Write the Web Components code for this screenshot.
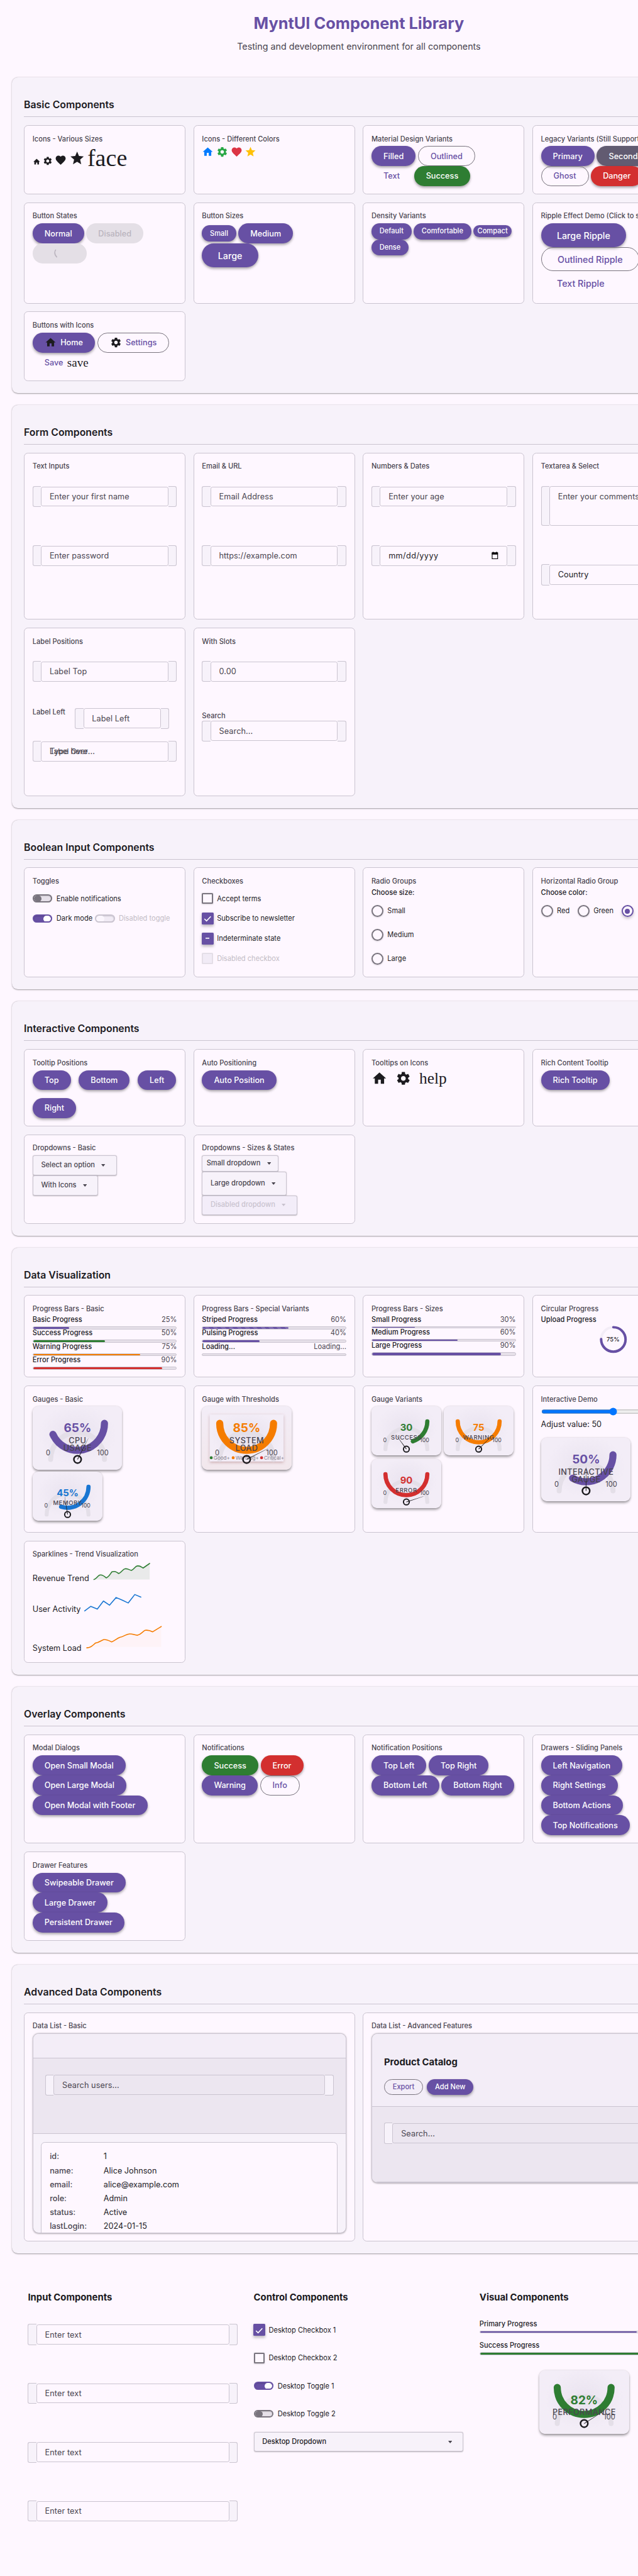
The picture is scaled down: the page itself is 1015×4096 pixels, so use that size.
<!DOCTYPE html>
<html lang="en">
<head>
<meta charset="utf-8">
<title>MyntUI Component Library</title>
<style>
html,body{margin:0;padding:0;background:#fef7ff}
body{width:1015px;height:4096px;overflow:hidden}
mynt-app{zoom:.79297}
</style>
</head>
<body>
<mynt-app></mynt-app>
<script>
const define=(name,css,render)=>customElements.define(name,class extends HTMLElement{
  connectedCallback(){
    if(this.shadowRoot)return;
    this.attachShadow({mode:'open'});
    const t=document.createElement('template');
    t.innerHTML='<style>*{box-sizing:border-box}:host{display:block;box-sizing:border-box}'+css+'</style>'+render(this);
    this.shadowRoot.append(t.content.cloneNode(true));
  }
});
const at=(e,n,d='')=>e.getAttribute(n)??d;

define('ui-row',`:host{display:flex;align-items:center;gap:4.5px;white-space:nowrap;width:max-content}
:host([g16]){gap:16px}:host([end]){align-items:flex-end}`,()=>'<slot></slot>');

define('ui-section',`:host{background:#f7f2fa;border-radius:12px;margin:0 0 24px;padding:40.6px 24px 24px;width:1392px;box-shadow:0 1px 2px rgba(0,0,0,.3),0 1px 3px 1px rgba(0,0,0,.06)}
h2{margin:0 0 16px;font:600 20px/30px Inter,sans-serif;height:39px;border-bottom:1px solid #cac4d0;color:#1c1b1f}
.g{display:grid;gap:16px}`,e=>`<h2>${at(e,'label')}</h2><div class="g" style="grid-template-columns:repeat(${at(e,'cols','4')},minmax(0,1fr));grid-template-rows:${at(e,'rows')}"><slot></slot></div>`);

define('ui-card',`:host{background:#fef7ff;border:1px solid #cac4d0;border-radius:8px;padding:16px;min-width:0}
h3{margin:0 0 4px;font:500 14px/21px Inter,sans-serif;color:#49454f;white-space:nowrap}`,e=>`<h3>${at(e,'label')}</h3><slot></slot>`);

define('ui-button',`:host{display:inline-flex;align-items:center;justify-content:center;gap:8px;height:40px;padding:0 24px;border-radius:20px;background:#6750a4;color:#fff;font:500 16px/24px Inter,sans-serif;white-space:nowrap;box-shadow:0 3px 6px rgba(0,0,0,.26),0 2px 4px rgba(0,0,0,.12)}
:host([v=outlined]){background:none;color:#6750a4;border:1px solid #79747e;box-shadow:none}
:host([v=text]){background:none;color:#6750a4;box-shadow:none}
:host([v=success]){background:#2e7d32}:host([v=danger]){background:#d32f2f}:host([v=secondary]){background:#625b71}
:host([v=off]){background:#e4dfe6;color:#bab4be;box-shadow:none}
:host([s=s]){height:32px;padding:0 16px;font-size:14px;border-radius:16px}
:host([s=c]){height:24px;padding:0 8px;font-size:14px;border-radius:12px}
:host([s=l]){height:48px;padding:0 32px;font-size:18px;border-radius:24px}
:host([wait]){width:109px;justify-content:flex-start;padding-left:43px}`,()=>'<slot></slot>');

const ICON={home:'M10 20v-6h4v6h5v-8h3L12 3 2 12h3v8z',
gear:'M19.14 12.94c.04-.3.06-.61.06-.94 0-.32-.02-.64-.07-.94l2.03-1.58c.18-.14.23-.41.12-.61l-1.92-3.32c-.12-.22-.37-.29-.59-.22l-2.39.96c-.5-.38-1.03-.7-1.62-.94l-.36-2.54c-.04-.24-.24-.41-.48-.41h-3.84c-.24 0-.43.17-.47.41l-.36 2.54c-.59.24-1.13.57-1.62.94l-2.39-.96c-.22-.08-.47 0-.59.22L2.74 8.87c-.12.21-.08.47.12.61l2.03 1.58c-.05.3-.09.63-.09.94s.02.64.07.94l-2.03 1.58c-.18.14-.23.41-.12.61l1.92 3.32c.12.22.37.29.59.22l2.39-.96c.5.38 1.03.7 1.62.94l.36 2.54c.05.24.24.41.48.41h3.84c.24 0 .44-.17.47-.41l.36-2.54c.59-.24 1.13-.56 1.62-.94l2.39.96c.22.08.47 0 .59-.22l1.92-3.32c.12-.22.07-.47-.12-.61l-2.01-1.58zM12 15.6c-1.98 0-3.6-1.62-3.6-3.6s1.62-3.6 3.6-3.6 3.6 1.62 3.6 3.6-1.62 3.6-3.6 3.6z',
heart:'M12 21.35l-1.45-1.32C5.4 15.36 2 12.28 2 8.5 2 5.42 4.42 3 7.5 3c1.74 0 3.41.81 4.5 2.09C13.09 3.81 14.76 3 16.5 3 19.58 3 22 5.42 22 8.5c0 3.78-3.4 6.86-8.55 11.54L12 21.35z',
star:'M12 17.27L18.18 21l-1.64-7.03L22 9.24l-7.19-.61L12 2 9.19 8.63 2 9.24l5.46 4.73L5.82 21z'};
define('ui-icon',`:host{flex:none;display:block;color:#1c1b1f}svg{display:block}`,e=>{const s=at(e,'size','24');return `<svg width="${s}" height="${s}" viewBox="0 0 24 24" fill="${at(e,'color','#1c1b1f')}"><path d="${ICON[at(e,'name')]}"/></svg>`});
define('ui-ligature',`:host{font-family:"Liberation Serif",serif;color:#1c1b1f;white-space:nowrap;line-height:1}`,()=>'<slot></slot>');
define('ui-spinner',`svg{display:block}`,()=>'<svg width="16" height="18" viewBox="0 0 16 18" fill="none"><path d="M3.4 1.2C.8 5.5.8 11.5 5.8 16.6" stroke="#bab4be" stroke-width="2"/></svg>');

define('ui-field',`:host{padding-top:25px;height:119px;font:400 16px/24px Inter,sans-serif;color:#49454f}
:host([area]){height:157px}:host([label]){padding-top:8px}
:host([left]){display:flex;padding-top:0;height:66px;width:274px}
.l{font:500 14px/17px Inter,sans-serif;height:17px;white-space:nowrap}
:host([left]) .l{flex:none;width:85px}
.w{display:flex;height:42px;align-items:center;flex:1}
:host([area]) .w{height:80px}
.a{width:17px;height:100%;border:1px solid #cac4d0;background:#f7f2fa;flex:none}
.a.p{border-right:0;border-radius:4px 0 0 4px}.a.q{border-left:0;border-radius:0 4px 4px 0}
.i{flex:1;min-width:0;height:40px;border:1px solid #cac4d0;border-radius:4px;padding:0 16px;display:flex;align-items:center;justify-content:space-between;white-space:nowrap}
:host([area]) .i{height:80px;align-items:flex-start;padding-top:8px}
:host([dark]) .i{color:#1c1b1f}
.t{display:grid}.t>*{grid-area:1/1}.o{font:400 15px/24px Inter,sans-serif}`,e=>{
const l=at(e,'label'),o=at(e,'over');
return `${l?`<div class="l">${l}</div>`:''}<div class="w"><span class="a p"></span><div class="i"><span class="t"><span style="letter-spacing:${at(e,'ls','.1px')}">${at(e,'text')}</span>${o?`<span class="o">${o}</span>`:''}</span><slot></slot></div><span class="a q"></span></div>`});
define('ui-calendar',`:host{width:16px}svg{display:block}`,()=>'<svg width="16" height="16" viewBox="0 0 16 16"><path d="M2.5 2.5h11v12h-11z" fill="none" stroke="#000" stroke-width="1.4"/><path d="M2 2h12v4H2zM3.5.5h2V3h-2zM10.5.5h2V3h-2z"/></svg>');

define('ui-toggle',`:host{display:inline-flex;align-items:center;height:40px;gap:8px;font:400 14px/20px Inter,sans-serif;color:#1c1b1f;white-space:nowrap}
.k{width:40px;height:16px;border:2.6px solid #79747e;border-radius:8px;background:#e6e0e9;overflow:hidden;display:flex;box-shadow:inset 0 1px 2px rgba(0,0,0,.2)}
.d{width:16px;height:12px;border-radius:6px;background:#79747e}
:host([on]) .k{background:#6750a4;border-color:#6750a4;justify-content:flex-end}:host([on]) .d{background:#fff}
:host([off]){color:#c3bdc6}:host([off]) .k{border-color:#cac4d0;background:#f1ebf5}:host([off]) .d{background:#fbf6fd}
.x{padding-top:2px}`,()=>'<span class="k"><span class="d"></span></span><span class="x"><slot></slot></span>');

define('ui-checkbox',`:host{display:flex;align-items:center;height:40px;gap:8px;font:400 14px/20px Inter,sans-serif;color:#1c1b1f;white-space:nowrap}
.b{width:22px;height:22px;border:2.6px solid #79747e;border-radius:2px;display:flex;align-items:center;justify-content:center;box-shadow:0 1px 3px rgba(0,0,0,.18)}
:host([on]) .b,:host([mid]) .b{background:#6750a4;border:0;width:24px;height:24px;margin:0 -1px;box-shadow:0 3px 6px rgba(0,0,0,.25)}
:host([off]){color:#c3bdc6}:host([off]) .b{border-color:#e4dee7;background:#f1ebf6;box-shadow:none}.x{padding-top:2px}`,e=>`<span class="b">${e.hasAttribute('on')?'<svg width="16" height="16" viewBox="0 0 16 16" fill="none" stroke="#fff" stroke-width="2"><path d="M1.5 8.8 5.8 13 14.3 4"/></svg>':e.hasAttribute('mid')?'<svg width="8" height="2"><rect width="8" height="2" fill="#fff"/></svg>':''}</span><span class="x"><slot></slot></span>`);

define('ui-radio',`:host{display:flex;align-items:center;height:48px;gap:8px;font:400 14px/20px Inter,sans-serif;color:#1c1b1f;white-space:nowrap}
.b{width:24px;height:24px;border:2.6px solid #79747e;border-radius:50%;display:flex;align-items:center;justify-content:center;box-shadow:0 1px 3px rgba(0,0,0,.18)}
:host([on]) .b{border-color:#6750a4;box-shadow:0 3px 6px rgba(0,0,0,.22)}.d{width:10px;height:10px;border-radius:50%;background:#6750a4}`,e=>`<span class="b">${e.hasAttribute('on')?'<span class="d"></span>':''}</span><slot></slot>`);
define('ui-legend',`:host{font:500 14px/16px Inter,sans-serif;color:#1c1b1f;height:21px}`,()=>'<slot></slot>');

define('ui-dropdown',`:host{display:flex;align-items:center;width:max-content;height:40px;border:1px solid #cac4d0;border-radius:4px;padding:0 16px;background:#f7f2fa;font:500 14px/20px Inter,sans-serif;color:#49454f;white-space:nowrap;box-shadow:0 1px 2px rgba(0,0,0,.26)}
:host([s=s]){height:32px;padding:0 8px}:host([s=l]){height:48px}
:host([off]){background:#f3edf9;color:#c9c3cf}
:host([wide]){width:auto;justify-content:space-between;color:#1c1b1f}
svg{margin:0 5.5px 0 13px;flex:none}:host([wide]) svg{color:#49454f}`,()=>'<span><slot></slot></span><svg width="8" height="5" viewBox="0 0 8 5" fill="currentColor"><path d="M0 0h8L4 5z"/></svg>');

define('ui-progress',`.h{display:flex;justify-content:space-between;height:20px;font:500 14px/15px Inter,sans-serif;color:#1c1b1f}
.h span+span{font-weight:400;color:#49454f}
.t{border:1px solid #cac4d0;border-radius:4px;background:#e6e0e9;overflow:hidden;margin-bottom:1px;display:flex}
.f{border-radius:3px}`,e=>{const p=at(e,'v','0'),h=at(e,'h','6'),c=at(e,'color','#6750a4');
const bg=e.hasAttribute('striped')?'repeating-linear-gradient(45deg,#6750a4 0 5.66px,#7f6bb4 5.66px 11.32px)':c;
return `<div class="h"><span>${at(e,'label')}</span><span>${at(e,'value',p+'%')}</span></div><div class="t" style="height:${h}px"><span class="f" style="width:${p}%;background:${bg}"></span></div>`});

define('ui-ring',`:host{font:500 14px/15px Inter,sans-serif;color:#1c1b1f}.c{display:grid;place-items:center;height:60px;margin-top:2px}.c>*{grid-area:1/1}.c span{font-size:12px}circle{fill:none}`,()=>`<div>Upload Progress</div><div class="c"><svg width="60" height="60" viewBox="0 0 60 60"><circle cx="30" cy="30" r="24.5" stroke="#f3edf7" stroke-width="5"/><circle cx="30" cy="30" r="24.5" stroke="#6750a4" stroke-width="5" stroke-linecap="round" stroke-dasharray="115.5 154" transform="rotate(-90 30 30)"/></svg><span>75%</span></div>`);

define('ui-gauge',`:host{flex:none;border-radius:12px;background:radial-gradient(ellipse at 50% 45%,#e9e3ef,#f3edf7 62%);box-shadow:0 3px 5px rgba(0,0,0,.3),0 1px 3px rgba(0,0,0,.15)}
:host([alert]){background:linear-gradient(#f3edf7,#f2e7ec)}
svg{display:block}text{font-family:Inter,sans-serif}`,e=>{
const S=e.hasAttribute('small'),W=S?140:180,H=S?98:127,r=S?42:54,cx=W/2,hy=S?86:106.7,vy=S?30.3:34.4,v=+at(e,'v'),c=at(e,'color','#6750a4');
const a=Math.min(180,v*2.4)*Math.PI/180,ex=cx+r*Math.cos(a),ey=vy+r*Math.sin(a),n=(v-50)*1.8,L=S?36:48;
const lines=at(e,'label').split(' '),lh=S?12:15.7,ly=S?62.7:83.7;
const ty=ly-(lines.length-1)*lh-(S?20:25);
let g=`<svg width="${W}" height="${H}" viewBox="0 0 ${W} ${H}">`;
if(e.hasAttribute('alert'))g+=`<defs><filter id="s" x="-10%" y="-10%" width="120%" height="130%"><feDropShadow dx="0" dy="2" stdDeviation="3" flood-color="#8a4b4b" flood-opacity=".4"/></filter><radialGradient id="b" cy=".45"><stop stop-color="#e7e1ed"/><stop offset="1" stop-color="#f3edf7"/></radialGradient></defs><rect x="16" y="16.7" width="148" height="94" fill="url(#b)" filter="url(#s)"/>`;
g+=`<path d="M${cx-r} ${hy}A${r} ${r} 0 0 1 ${cx+r} ${hy}" fill="none" stroke="#e4dfe8" stroke-width="${S?8:10}" stroke-linecap="round"/>`;
g+=`<path d="M${cx+r} ${vy}A${r} ${r} 0 0 1 ${ex} ${ey}" fill="none" stroke="${c}" stroke-width="${S?8.5:14.3}" stroke-linecap="round"/>`;
if(e.hasAttribute('alert')){const F=(x,k,t)=>`<circle cx="${x+3}" cy="103.4" r="3" fill="${k}"/><text x="${x+7.8}" y="106.6" font-size="10.2" fill="#857f8a">${t}</text>`;
g+=F(16,'#2e7d32','Good+')+F(60,'#f57c00','Warning+')+F(117,'#d32f2f','Critical+')}
g+=`<text x="${cx}" y="${ty+(S?6.8:8.8)}" font-size="${S?18.7:24}" font-weight="700" fill="${c}" text-anchor="middle">${at(e,'value',v+'%')}</text>`;
lines.forEach((t,i)=>{g+=`<text x="${cx}" y="${ly-(lines.length-1-i)*lh+(S?4.4:5.8)}" font-size="${S?12:16}" font-weight="500" letter-spacing="${S?.7:.5}" fill="#49454f" text-anchor="middle">${t}</text>`});
const f=S?11.2:14,my=S?68.3:93.3;
g+=`<text x="${S?27:31}" y="${my+f*.36}" font-size="${f}" fill="#49454f" text-anchor="middle">0</text><text x="${S?106.5:140.6}" y="${my+f*.36}" font-size="${f}" fill="#49454f" text-anchor="middle">100</text>`;
g+=`<circle cx="${cx}" cy="${hy}" r="${S?5.8:7.4}" fill="none" stroke="#1c1b1f" stroke-width="${S?2.5:3.1}"/><path transform="rotate(${n} ${cx} ${hy})" d="M${cx-.7} ${hy}L${cx-.15} ${hy-L}h.3L${cx+.7} ${hy}z" fill="#1c1b1f"/>`;
return g+'</svg>'});

define('ui-range',`input{display:block;width:290px;height:16px;margin:0}p{margin:0;font:400 16px/24px Inter,sans-serif;color:#1c1b1f}:host{padding-top:2px;height:63px}p{padding-top:6px}`,()=>'<input type="range" min="0" max="100" value="50"><p>Adjust value: 50</p>');

define('ui-spark',`:host{display:flex;height:var(--h);font:400 16px/20px Inter,sans-serif;color:#1c1b1f;white-space:nowrap}span{flex:none}svg{flex:none;overflow:visible}`,e=>`<span style="width:${at(e,'w')}px;padding-top:${at(e,'top')}px">${at(e,'label')}</span><svg width="160" height="50" fill="none" stroke-width="2" stroke-linecap="round" stroke-linejoin="round">${at(e,'area')?`<path d="${at(e,'d')+at(e,'area')}" fill="${at(e,'color')}" opacity="${at(e,'op','.1')}"/>`:''}<path d="${at(e,'d')}" stroke="${at(e,'color')}"/></svg>`);

define('ui-list',`:host{border:1px solid #cac4d0;border-radius:12px;background:#f7f2fa;overflow:hidden;box-shadow:0 1px 3px rgba(0,0,0,.3);display:flex;flex-direction:column}
.h{background:#f3edf7;border-bottom:1px solid #cac4d0;flex:none;padding:0 24px}
.s{background:#ece6f0;border-bottom:1px solid #cac4d0;height:151px;flex:none;padding:7px 24px 0}
h3{margin:0 0 20px;padding-top:42px;font:700 18.72px/28px Inter,sans-serif;color:#1c1b1f}
.r{padding:16px}.c{background:#fef7ff;border:1px solid #cac4d0;border-radius:8px;padding:15px 16px;height:220px;display:grid;grid-template-columns:108px 1fr;grid-auto-rows:28px;font:400 16px/28px Inter,sans-serif;color:#1c1b1f}
.c b{font-weight:500;color:#49454f}`,e=>{
const rows=at(e,'rows');
return `<div class="h" style="height:${at(e,'head')}px">${at(e,'title')?`<h3>${at(e,'title')}</h3><slot></slot>`:''}</div><div class="s"><ui-field text="${at(e,'search')}"></ui-field></div>${rows?`<div class="r"><div class="c">${rows.split('|').map(r=>{const i=r.indexOf('=');return `<b>${r.slice(0,i)}:</b><span>${r.slice(i+1)}</span>`}).join('')}</div></div>`:''}`});

define('ui-column',`:host{width:421px;flex:none}h3{margin:0;height:60px;font:700 18.72px/28px Inter,sans-serif;color:#1c1b1f}`,e=>`<h3>${at(e,'label')}</h3><slot></slot>`);

define('mynt-app',`:host{width:1280px;height:5165px;overflow:hidden;background:#fef7ff;color:#1c1b1f;font-family:Inter,sans-serif}
header{width:1392px;height:155.2px;padding-top:23px;text-align:center}
h1{margin:0 0 8.5px;font:700 32px/48px Inter,sans-serif;color:#6750a4}
header p{margin:0;font:400 18px/27px Inter,sans-serif;color:#49454f}
main{width:1416px;padding-left:24px}
.stack{display:flex;flex-direction:column;gap:3.5px;align-items:flex-start}
.stack.b{gap:8px}
.row{display:flex;gap:4.5px}
.bot{display:flex;gap:32px;padding:51px 0 0 32px}
.fields{margin-top:-18px}.fields ui-field{height:118px}
.ctl{margin-top:-1px}.ctl>*{display:flex;height:40px;margin-bottom:16px}
.g{display:flex;justify-content:center;padding-top:30px}
.bars{display:flex;flex-direction:column;gap:16px}`,()=>`
<main>
<header><h1>MyntUI Component Library</h1><p>Testing and development environment for all components</p></header>
<ui-section label="Basic Components" rows="139px 203px 139px">
<ui-card label="Icons - Various Sizes"><ui-row end style="height:40px"><ui-icon name="home" size="16"></ui-icon><ui-icon name="gear" size="20"></ui-icon><ui-icon name="heart"></ui-icon><ui-icon name="star" size="32"></ui-icon><ui-ligature style="font-size:48px;margin-bottom:-8px">face</ui-ligature></ui-row></ui-card>
<ui-card label="Icons - Different Colors"><ui-row><ui-icon name="home" color="#007bff"></ui-icon><ui-icon name="gear" color="#28a745"></ui-icon><ui-icon name="heart" color="#dc3545"></ui-icon><ui-icon name="star" color="#ffc107"></ui-icon></ui-row></ui-card>
<ui-card label="Material Design Variants"><ui-row><ui-button>Filled</ui-button><ui-button v="outlined">Outlined</ui-button></ui-row><ui-row><ui-button v="text">Text</ui-button><ui-button v="success">Success</ui-button></ui-row></ui-card>
<ui-card label="Legacy Variants (Still Supported)"><ui-row><ui-button>Primary</ui-button><ui-button v="secondary">Secondary</ui-button></ui-row><ui-row><ui-button v="outlined">Ghost</ui-button><ui-button v="danger">Danger</ui-button></ui-row></ui-card>
<ui-card label="Button States"><ui-row><ui-button>Normal</ui-button><ui-button v="off">Disabled</ui-button></ui-row><ui-row><ui-button v="off" wait><ui-spinner></ui-spinner></ui-button></ui-row></ui-card>
<ui-card label="Button Sizes"><ui-row><ui-button s="s">Small</ui-button><ui-button>Medium</ui-button></ui-row><ui-row><ui-button s="l">Large</ui-button></ui-row></ui-card>
<ui-card label="Density Variants"><ui-row><ui-button s="s">Default</ui-button><ui-button s="s">Comfortable</ui-button><ui-button s="c">Compact</ui-button></ui-row><ui-row><ui-button s="s">Dense</ui-button></ui-row></ui-card>
<ui-card label="Ripple Effect Demo (Click to see)"><ui-row><ui-button s="l">Large Ripple</ui-button></ui-row><ui-row><ui-button s="l" v="outlined">Outlined Ripple</ui-button></ui-row><ui-row><ui-button s="l" v="text">Text Ripple</ui-button></ui-row></ui-card>
<ui-card label="Buttons with Icons"><ui-row><ui-button><ui-icon name="home"></ui-icon>Home</ui-button><ui-button v="outlined"><ui-icon name="gear"></ui-icon>Settings</ui-button></ui-row><ui-row><ui-button v="text">Save<ui-ligature style="font-size:24px">save</ui-ligature></ui-button></ui-row></ui-card>
</ui-section>
<ui-section label="Form Components" rows="335px 337.6px">
<ui-card label="Text Inputs"><ui-field text="Enter your first name"></ui-field><ui-field text="Enter password"></ui-field></ui-card>
<ui-card label="Email &amp;amp; URL"><ui-field text="Email Address"></ui-field><ui-field text="https://example.com"></ui-field></ui-card>
<ui-card label="Numbers &amp;amp; Dates"><ui-field text="Enter your age"></ui-field><ui-field text="mm/dd/yyyy" dark ls=".5px"><ui-calendar></ui-calendar></ui-field></ui-card>
<ui-card label="Textarea &amp;amp; Select"><ui-field area text="Enter your comments"></ui-field><ui-field text="Country" dark></ui-field></ui-card>
<ui-card label="Label Positions"><ui-field text="Label Top"></ui-field><ui-field left label="Label Left" text="Label Left"></ui-field><ui-field style="padding-top:0" text="Type here..." over="Label Over"></ui-field></ui-card>
<ui-card label="With Slots"><ui-field text="0.00"></ui-field><ui-field label="Search" text="Search..."></ui-field></ui-card>
</ui-section>
<ui-section label="Boolean Input Components" rows="220.4px">
<ui-card label="Toggles"><ui-row><ui-toggle>Enable notifications</ui-toggle></ui-row><ui-row><ui-toggle on>Dark mode</ui-toggle><ui-toggle off>Disabled toggle</ui-toggle></ui-row></ui-card>
<ui-card label="Checkboxes"><ui-checkbox>Accept terms</ui-checkbox><ui-checkbox on>Subscribe to newsletter</ui-checkbox><ui-checkbox mid>Indeterminate state</ui-checkbox><ui-checkbox off>Disabled checkbox</ui-checkbox></ui-card>
<ui-card label="Radio Groups"><ui-legend>Choose size:</ui-legend><ui-radio>Small</ui-radio><ui-radio>Medium</ui-radio><ui-radio>Large</ui-radio></ui-card>
<ui-card label="Horizontal Radio Group"><ui-legend>Choose color:</ui-legend><ui-row g16><ui-radio>Red</ui-radio><ui-radio>Green</ui-radio><ui-radio on></ui-radio></ui-row></ui-card>
</ui-section>
<ui-section label="Interactive Components" rows="155px 179px">
<ui-card label="Tooltip Positions"><ui-row g16><ui-button>Top</ui-button><ui-button>Bottom</ui-button><ui-button>Left</ui-button></ui-row><ui-row style="margin-top:16px"><ui-button>Right</ui-button></ui-row></ui-card>
<ui-card label="Auto Positioning"><ui-button>Auto Position</ui-button></ui-card>
<ui-card label="Tooltips on Icons"><ui-row g16><ui-icon name="home" size="32"></ui-icon><ui-icon name="gear" size="32"></ui-icon><ui-ligature style="font-size:32px">help</ui-ligature></ui-row></ui-card>
<ui-card label="Rich Content Tooltip"><ui-button>Rich Tooltip</ui-button></ui-card>
<ui-card label="Dropdowns - Basic"><ui-dropdown>Select an option</ui-dropdown><ui-dropdown>With Icons</ui-dropdown></ui-card>
<ui-card label="Dropdowns - Sizes &amp;amp; States"><ui-dropdown s="s">Small dropdown</ui-dropdown><ui-dropdown s="l">Large dropdown</ui-dropdown><ui-dropdown off>Disabled dropdown</ui-dropdown></ui-card>
</ui-section>
<ui-section label="Data Visualization" rows="165px 295px 245px">
<ui-card label="Progress Bars - Basic"><ui-progress label="Basic Progress" v="25"></ui-progress><ui-progress label="Success Progress" v="50" color="#2e7d32"></ui-progress><ui-progress label="Warning Progress" v="75" color="#f57c00"></ui-progress><ui-progress label="Error Progress" v="90" color="#d32f2f"></ui-progress></ui-card>
<ui-card label="Progress Bars - Special Variants"><ui-progress label="Striped Progress" v="60" striped></ui-progress><ui-progress label="Pulsing Progress" v="40"></ui-progress><ui-progress label="Loading..." value="Loading..."></ui-progress></ui-card>
<ui-card label="Progress Bars - Sizes"><ui-progress label="Small Progress" v="30" h="4"></ui-progress><ui-progress label="Medium Progress" v="60"></ui-progress><ui-progress label="Large Progress" v="90" h="8"></ui-progress></ui-card>
<ui-card label="Circular Progress"><ui-ring></ui-ring></ui-card>
<ui-card label="Gauges - Basic"><div class="stack"><ui-gauge v="65" label="CPU USAGE"></ui-gauge><ui-gauge small v="45" color="#1976d2" label="MEMORY"></ui-gauge></div></ui-card>
<ui-card label="Gauge with Thresholds"><div class="stack"><ui-gauge alert v="85" color="#f57c00" label="SYSTEM LOAD"></ui-gauge></div></ui-card>
<ui-card label="Gauge Variants"><div class="stack b"><div class="row"><ui-gauge small v="30" value="30" color="#2e7d32" label="SUCCESS"></ui-gauge><ui-gauge small v="75" value="75" color="#f57c00" label="WARNING"></ui-gauge></div><ui-gauge small v="90" value="90" color="#d32f2f" label="ERROR"></ui-gauge></div></ui-card>
<ui-card label="Interactive Demo"><ui-range></ui-range><div class="stack"><ui-gauge v="50" label="INTERACTIVE GAUGE"></ui-gauge></div></ui-card>
<ui-card label="Sparklines - Trend Visualization"><ui-spark style="--h:60px" label="Revenue Trend" w="121" top="24" color="#2e7d32" d="M1.8 36C6 35 8 31 11 28.5C15 25 20 27 26.5 32.7C33 30 36 22 38 20.5C44 18.5 47 21 51.5 24C58 21 60 15 64 14.5C70 13.5 73 17 77 17.7C83 15 85 9.5 88 9C94 7.5 97 11 100.5 12.9L113.6 3.8" area="V36H1.8z"></ui-spark><ui-spark style="--h:65px" label="User Activity" w="100" top="26" color="#1976d2" d="M4.8 38.4L17 29.3L30.1 34.8L42.3 18.6L54.6 26.9L67.7 11.5L79.9 16.6L92.1 22.5L105.2 5.5L117.4 10.7"></ui-spark><ui-spark style="--h:60px" label="System Load" w="105" top="39" color="#f57c00" op=".03" d="M3.9 48.1C12 48.5 16 43 21 38.6C28 38 32 33.5 38 31.6C44 31 48 33.5 53.7 36.2C60 34 64 29.5 70 27.1C80 25 82 20.5 90 20.1C97 20 100 23 105.9 22.8C113 21 116 15 121 13C127 12 131 13.5 136.1 16L153.3 5.4" area="V46.5H3.9z"></ui-spark></ui-card>
</ui-section>
<ui-section label="Overlay Components" rows="219px 179px">
<ui-card label="Modal Dialogs"><ui-row><ui-button>Open Small Modal</ui-button></ui-row><ui-row><ui-button>Open Large Modal</ui-button></ui-row><ui-row><ui-button>Open Modal with Footer</ui-button></ui-row></ui-card>
<ui-card label="Notifications"><ui-row><ui-button v="success">Success</ui-button><ui-button v="danger">Error</ui-button></ui-row><ui-row><ui-button>Warning</ui-button><ui-button v="outlined">Info</ui-button></ui-row></ui-card>
<ui-card label="Notification Positions"><ui-row><ui-button>Top Left</ui-button><ui-button>Top Right</ui-button></ui-row><ui-row><ui-button>Bottom Left</ui-button><ui-button>Bottom Right</ui-button></ui-row></ui-card>
<ui-card label="Drawers - Sliding Panels"><ui-row><ui-button>Left Navigation</ui-button></ui-row><ui-row><ui-button>Right Settings</ui-button></ui-row><ui-row><ui-button>Bottom Actions</ui-button></ui-row><ui-row><ui-button>Top Notifications</ui-button></ui-row></ui-card>
<ui-card label="Drawer Features"><ui-row><ui-button>Swipeable Drawer</ui-button></ui-row><ui-row><ui-button>Large Drawer</ui-button></ui-row><ui-row><ui-button>Persistent Drawer</ui-button></ui-row></ui-card>
</ui-section>
<ui-section label="Advanced Data Components" cols="2" rows="459px">
<ui-card label="Data List - Basic"><ui-list style="height:400px" head="49" search="Search users..." rows="id=1|name=Alice Johnson|email=alice@example.com|role=Admin|status=Active|lastLogin=2024-01-15"></ui-list></ui-card>
<ui-card label="Data List - Advanced Features"><ui-list style="height:300px" head="146" title="Product Catalog" search="Search..."><ui-row style="gap:8px"><ui-button s="s" v="outlined">Export</ui-button><ui-button s="s">Add New</ui-button></ui-row></ui-list></ui-card>
</ui-section>
<div class="bot">
<ui-column label="Input Components"><div class="fields"><ui-field text="Enter text"></ui-field><ui-field text="Enter text"></ui-field><ui-field text="Enter text"></ui-field><ui-field text="Enter text"></ui-field></div></ui-column>
<ui-column label="Control Components"><div class="ctl"><ui-checkbox on>Desktop Checkbox 1</ui-checkbox><ui-checkbox>Desktop Checkbox 2</ui-checkbox><ui-toggle on>Desktop Toggle 1</ui-toggle><ui-toggle>Desktop Toggle 2</ui-toggle><ui-dropdown wide>Desktop Dropdown</ui-dropdown></div></ui-column>
<ui-column label="Visual Components"><div class="bars"><ui-progress label="Primary Progress" v="75"></ui-progress><ui-progress label="Success Progress" v="90" color="#2e7d32"></ui-progress></div><div class="g"><ui-gauge v="82" color="#2e7d32" label="PERFORMANCE"></ui-gauge></div></ui-column>
</div>
</main>`);
</script>
</body>
</html>
